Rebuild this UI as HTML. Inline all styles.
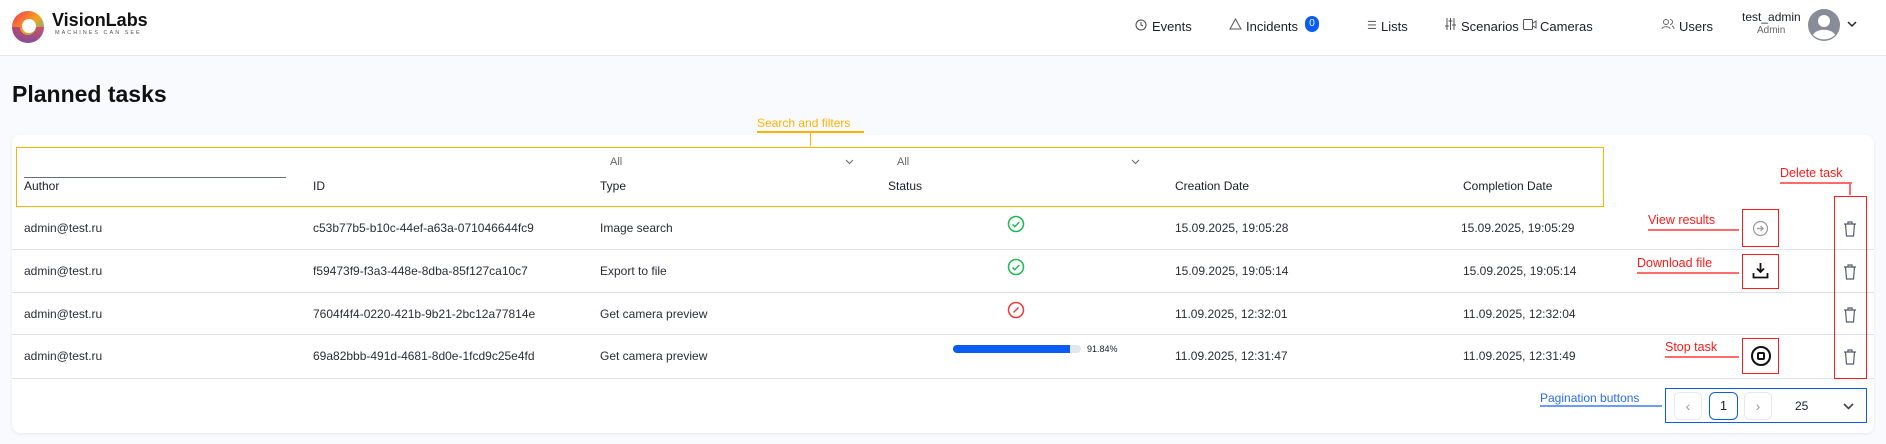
<!DOCTYPE html>
<html><head><meta charset="utf-8"><style>
*{box-sizing:border-box;margin:0;padding:0}
body{width:1886px;height:444px;background:#f9fafd;font-family:"Liberation Sans",sans-serif;color:#1b1d2a;position:relative;overflow:hidden}
.a{position:absolute;white-space:nowrap}
.hdr{position:absolute;left:0;top:0;width:1886px;height:56px;background:#fff;border-bottom:1px solid #e6e7ee}
.nav{font-size:13px;color:#1b1d2a;top:19px}
.card{position:absolute;left:12px;top:135px;width:1862px;height:298px;background:#fff;border-radius:8px;box-shadow:0 1px 3px rgba(0,0,0,.08)}
.th{font-size:12px;top:179px}
.td{font-size:12px;color:#2a2c38}
.line{position:absolute;left:12px;width:1862px;height:1px;background:#dde0e8}
.red{color:#ff1a1a;font-size:12.5px}
.rb{position:absolute;border:1.5px solid #ff1a1a}
.ru{position:absolute;height:2px;background:#ff6b6b}
</style></head><body>
<div class="hdr"></div>
<svg class="a" style="left:12px;top:11px" width="32" height="32" viewBox="0 0 32 32"><defs><linearGradient id="g" x1="0" y1="0" x2="1" y2="1"><stop offset="0" stop-color="#f0325a"/><stop offset=".5" stop-color="#f7a21b"/><stop offset="1" stop-color="#20b8d8"/></linearGradient><linearGradient id="g2" x1="0" y1="1" x2="1" y2="0"><stop offset="0" stop-color="#6a3da8"/><stop offset="1" stop-color="#d8406a"/></linearGradient></defs><circle cx="16" cy="16" r="16" fill="url(#g)"/><path d="M0 16 A16 16 0 0 0 32 16 L24 16 A8 8 0 0 1 8 16Z" fill="url(#g2)" opacity=".85"/><circle cx="17" cy="15" r="7" fill="#fff"/></svg>
<div class="a" style="left:52px;top:10px;font-size:18px;font-weight:bold;color:#111">VisionLabs</div>
<div class="a" style="left:55px;top:30px;font-size:5.5px;letter-spacing:2px;color:#555">MACHINES CAN SEE</div>

<svg class="a" style="left:1135px;top:19px" width="12" height="12" viewBox="0 0 12 12" fill="none" stroke="#444" stroke-width="1"><circle cx="6" cy="6" r="5"/><path d="M6 3v3l2 1"/></svg>
<div class="a nav" style="left:1152px">Events</div>
<svg class="a" style="left:1229px;top:18px" width="13" height="12" viewBox="0 0 13 12" fill="none" stroke="#555" stroke-width="1"><path d="M6.5 1L12 11H1Z"/></svg>
<div class="a nav" style="left:1246px">Incidents</div>
<div class="a" style="left:1305px;top:16px;width:14px;height:16px;border-radius:8px;background:#0a5cf5;color:#fff;font-size:10px;text-align:center;line-height:16px">0</div>
<div class="a nav" style="left:1367px;font-size:11px;color:#666">☰</div>
<div class="a nav" style="left:1381px">Lists</div>
<svg class="a" style="left:1445px;top:18px" width="11" height="12" viewBox="0 0 11 12" stroke="#555" stroke-width="1"><path d="M2 0v12M5.5 0v12M9 0v12M0 8h4M3.5 3h4M7 7h4"/></svg>
<div class="a nav" style="left:1461px">Scenarios</div>
<svg class="a" style="left:1523px;top:19px" width="14" height="11" viewBox="0 0 14 11" fill="none" stroke="#555" stroke-width="1"><rect x=".5" y=".5" width="9" height="10" rx="1"/><path d="M10 4l3-2v7l-3-2"/></svg>
<div class="a nav" style="left:1540px">Cameras</div>
<svg class="a" style="left:1661px;top:18px" width="14" height="12" viewBox="0 0 14 12" fill="none" stroke="#666" stroke-width="1"><circle cx="5" cy="4" r="2.5"/><path d="M1 11c0-3 8-3 8 0M9 1.5a2.5 2.5 0 010 5M11 8c1.5.5 2 1.5 2 3"/></svg>
<div class="a nav" style="left:1679px">Users</div>
<div class="a" style="left:1742px;top:10px;font-size:12px">test_admin</div>
<div class="a" style="left:1757px;top:25px;font-size:10px;color:#666">Admin</div>
<svg class="a" style="left:1808px;top:9px" width="32" height="32" viewBox="0 0 32 32"><circle cx="16" cy="16" r="16" fill="#888c99"/><circle cx="16" cy="12" r="6" fill="#fff"/><path d="M5 26c3-7 19-7 22 0a16 16 0 01-22 0z" fill="#fff"/></svg>
<svg class="a" style="left:1847px;top:21px" width="10" height="7" viewBox="0 0 10 7" fill="none" stroke="#222" stroke-width="1.5"><path d="M1 1l4 4 4-4"/></svg>

<div class="a" style="left:12px;top:81px;font-size:23px;font-weight:bold;color:#111">Planned tasks</div>

<div class="card"></div>
<div class="a" style="left:757px;top:116px;font-size:12px;color:#ffb300">Search and filters</div>
<div class="a" style="left:757px;top:131px;width:107px;height:1.5px;background:#ffb300"></div>
<div class="a" style="left:810px;top:132px;width:1px;height:14px;background:#ffb300"></div>
<div class="a" style="left:16px;top:147px;width:1588px;height:60px;border:1.5px solid #ffb300"></div>
<div class="a" style="left:24px;top:177px;width:262px;height:1px;background:#666b7a"></div>
<div class="a" style="left:610px;top:156px;font-size:11px;color:#666">All</div>
<svg class="a" style="left:845px;top:159px" width="9" height="6" viewBox="0 0 9 6" fill="none" stroke="#666"><path d="M1 1l3.5 3.5L8 1"/></svg>
<div class="a" style="left:897px;top:156px;font-size:11px;color:#666">All</div>
<svg class="a" style="left:1131px;top:159px" width="9" height="6" viewBox="0 0 9 6" fill="none" stroke="#666"><path d="M1 1l3.5 3.5L8 1"/></svg>
<div class="a th" style="left:24px">Author</div>
<div class="a th" style="left:313px">ID</div>
<div class="a th" style="left:600px">Type</div>
<div class="a th" style="left:888px">Status</div>
<div class="a th" style="left:1175px">Creation Date</div>
<div class="a th" style="left:1463px">Completion Date</div>

<div class="line" style="top:249px"></div>
<div class="line" style="top:292px"></div>
<div class="line" style="top:334px"></div>
<div class="line" style="top:378px"></div>

<div class="a td" style="left:24px;top:221px">admin@test.ru</div>
<div class="a td" style="left:313px;top:221px">c53b77b5-b10c-44ef-a63a-071046644fc9</div>
<div class="a td" style="left:600px;top:221px">Image search</div>
<div class="a td" style="left:1175px;top:221px">15.09.2025, 19:05:28</div>
<div class="a td" style="left:1461px;top:221px">15.09.2025, 19:05:29</div>

<div class="a td" style="left:24px;top:264px">admin@test.ru</div>
<div class="a td" style="left:313px;top:264px">f59473f9-f3a3-448e-8dba-85f127ca10c7</div>
<div class="a td" style="left:600px;top:264px">Export to file</div>
<div class="a td" style="left:1175px;top:264px">15.09.2025, 19:05:14</div>
<div class="a td" style="left:1463px;top:264px">15.09.2025, 19:05:14</div>

<div class="a td" style="left:24px;top:307px">admin@test.ru</div>
<div class="a td" style="left:313px;top:307px">7604f4f4-0220-421b-9b21-2bc12a77814e</div>
<div class="a td" style="left:600px;top:307px">Get camera preview</div>
<div class="a td" style="left:1175px;top:307px">11.09.2025, 12:32:01</div>
<div class="a td" style="left:1463px;top:307px">11.09.2025, 12:32:04</div>

<div class="a td" style="left:24px;top:349px">admin@test.ru</div>
<div class="a td" style="left:313px;top:349px">69a82bbb-491d-4681-8d0e-1fcd9c25e4fd</div>
<div class="a td" style="left:600px;top:349px">Get camera preview</div>
<div class="a td" style="left:1175px;top:349px">11.09.2025, 12:31:47</div>
<div class="a td" style="left:1463px;top:349px">11.09.2025, 12:31:49</div>

<svg class="a" style="left:1007px;top:215px" width="18" height="18" viewBox="0 0 18 18" fill="none" stroke="#1db954" stroke-width="1.5"><circle cx="9" cy="9" r="7.5"/><path d="M5.5 9.5l2.3 2.2 4.5-4.7"/></svg>
<svg class="a" style="left:1007px;top:258px" width="18" height="18" viewBox="0 0 18 18" fill="none" stroke="#1db954" stroke-width="1.5"><circle cx="9" cy="9" r="7.5"/><path d="M5.5 9.5l2.3 2.2 4.5-4.7"/></svg>
<svg class="a" style="left:1007px;top:301px" width="18" height="18" viewBox="0 0 18 18" fill="none" stroke="#f03838" stroke-width="1.5"><circle cx="9" cy="9" r="7.5"/><path d="M6.5 11.5l5-5"/></svg>
<div class="a" style="left:953px;top:345px;width:128px;height:8px;border-radius:4px;background:#e3e6ef"></div>
<div class="a" style="left:953px;top:345px;width:117px;height:8px;border-radius:4px 0 0 4px;background:#0a5cf5"></div>
<div class="a" style="left:1087px;top:344px;font-size:9px">91.84%</div>

<div class="a red" style="left:1648px;top:213px">View results</div>
<div class="ru" style="left:1648px;top:229px;width:91px"></div>
<div class="rb" style="left:1742px;top:209px;width:37px;height:38px"></div>
<svg class="a" style="left:1752px;top:220px" width="17" height="17" viewBox="0 0 17 17" fill="none" stroke="#999" stroke-width="1.2"><circle cx="8.5" cy="8.5" r="7"/><path d="M5 8.5h6M8.5 6l2.5 2.5L8.5 11"/></svg>

<div class="a red" style="left:1637px;top:256px">Download file</div>
<div class="ru" style="left:1637px;top:272px;width:102px"></div>
<div class="rb" style="left:1742px;top:254px;width:37px;height:35px"></div>
<svg class="a" style="left:1752px;top:262px" width="17" height="17" viewBox="0 0 17 17" fill="none" stroke="#111" stroke-width="1.8"><path d="M8.5 1v9M5 6.5l3.5 3.5L12 6.5M1.5 11v4.5h14V11"/></svg>

<div class="a red" style="left:1665px;top:340px">Stop task</div>
<div class="ru" style="left:1665px;top:356px;width:74px"></div>
<div class="rb" style="left:1742px;top:338px;width:37px;height:36px"></div>
<svg class="a" style="left:1750px;top:345px" width="22" height="22" viewBox="0 0 22 22" fill="none" stroke="#111" stroke-width="2"><circle cx="11" cy="11" r="9"/><rect x="8" y="8" width="6" height="6" rx="1"/></svg>

<div class="a red" style="left:1780px;top:166px">Delete task</div>
<div class="ru" style="left:1780px;top:182px;width:72px"></div>
<div class="a" style="left:1849px;top:182px;width:2px;height:13px;background:#ff6b6b"></div>
<div class="rb" style="left:1834px;top:196px;width:33px;height:183px"></div>
<svg class="a" style="left:1843px;top:221px" width="14" height="16" viewBox="0 0 14 16" fill="none" stroke="#555b6a" stroke-width="1.2"><path d="M1 3h12M5 3V1h4v2M2.5 3l1 12h7l1-12"/></svg>
<svg class="a" style="left:1843px;top:264px" width="14" height="16" viewBox="0 0 14 16" fill="none" stroke="#555b6a" stroke-width="1.2"><path d="M1 3h12M5 3V1h4v2M2.5 3l1 12h7l1-12"/></svg>
<svg class="a" style="left:1843px;top:307px" width="14" height="16" viewBox="0 0 14 16" fill="none" stroke="#555b6a" stroke-width="1.2"><path d="M1 3h12M5 3V1h4v2M2.5 3l1 12h7l1-12"/></svg>
<svg class="a" style="left:1843px;top:349px" width="14" height="16" viewBox="0 0 14 16" fill="none" stroke="#555b6a" stroke-width="1.2"><path d="M1 3h12M5 3V1h4v2M2.5 3l1 12h7l1-12"/></svg>

<div class="a" style="left:1540px;top:391px;font-size:12px;color:#2a6cf5">Pagination buttons</div>
<div class="a" style="left:1540px;top:405px;width:122px;height:2px;background:#6b9cf7"></div>
<div class="a" style="left:1665px;top:388px;width:202px;height:35px;border:1.5px solid #0a5cf5"></div>
<div class="a" style="left:1674px;top:392px;width:28px;height:28px;border:1px solid #e6e8ef;border-radius:6px;color:#999;text-align:center;line-height:26px;font-size:14px">‹</div>
<div class="a" style="left:1709px;top:392px;width:29px;height:28px;border:1.5px solid #0a5cf5;border-radius:6px;text-align:center;line-height:25px;font-size:13px">1</div>
<div class="a" style="left:1744px;top:392px;width:28px;height:28px;border:1px solid #e6e8ef;border-radius:6px;color:#999;text-align:center;line-height:26px;font-size:14px">›</div>
<div class="a" style="left:1795px;top:399px;font-size:12px">25</div>
<svg class="a" style="left:1843px;top:403px" width="11" height="7" viewBox="0 0 11 7" fill="none" stroke="#444" stroke-width="1.6"><path d="M1 1l4.5 4.5L10 1"/></svg>
</body></html>
